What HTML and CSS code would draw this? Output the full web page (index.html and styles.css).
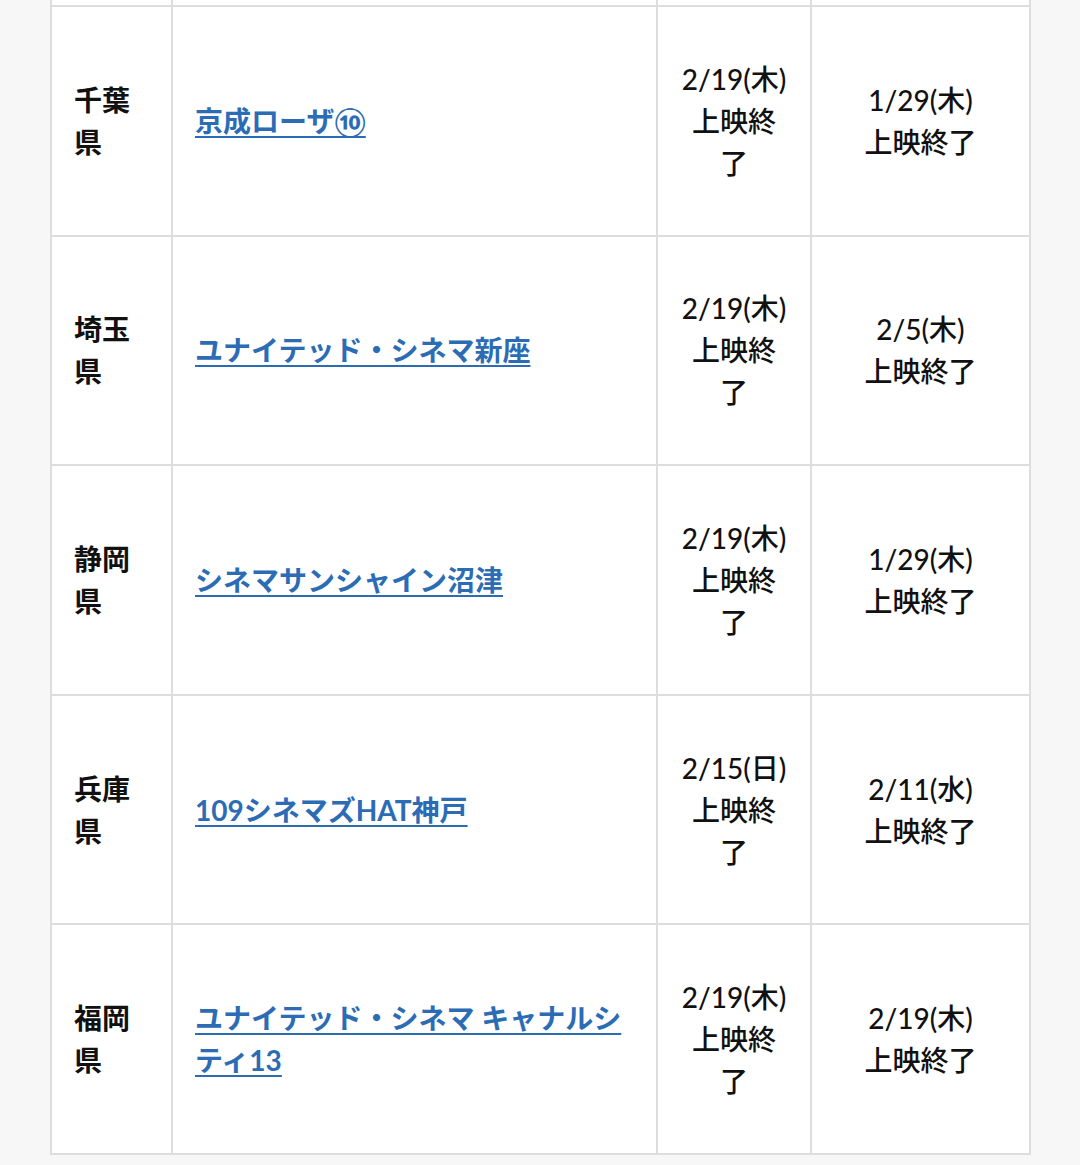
FILE: index.html
```html
<!DOCTYPE html>
<html lang="ja">
<head>
<meta charset="utf-8">
<link rel="stylesheet" href="styles.css">
</head>
<body>
<table class="theaters">
  <colgroup>
    <col class="c-pref"><col class="c-name"><col class="c-date"><col class="c-end">
  </colgroup>
  <tr class="spacer"><td></td><td></td><td></td><td></td></tr>
  <tr>
    <td class="pref">千葉県</td>
    <td class="name"><a href="#">京成ローザ⑩</a></td>
    <td class="date">2/19(木)上映終了</td>
    <td class="date">1/29(木)<br>上映終了</td>
  </tr>
  <tr>
    <td class="pref">埼玉県</td>
    <td class="name"><a href="#">ユナイテッド・シネマ新座</a></td>
    <td class="date">2/19(木)上映終了</td>
    <td class="date">2/5(木)<br>上映終了</td>
  </tr>
  <tr>
    <td class="pref">静岡県</td>
    <td class="name"><a href="#">シネマサンシャイン沼津</a></td>
    <td class="date">2/19(木)上映終了</td>
    <td class="date">1/29(木)<br>上映終了</td>
  </tr>
  <tr>
    <td class="pref">兵庫県</td>
    <td class="name"><a href="#">109シネマズHAT神戸</a></td>
    <td class="date">2/15(日)上映終了</td>
    <td class="date">2/11(水)<br>上映終了</td>
  </tr>
  <tr>
    <td class="pref">福岡県</td>
    <td class="name"><a href="#">ユナイテッド・シネマ キャナルシティ13</a></td>
    <td class="date">2/19(木)上映終了</td>
    <td class="date">2/19(木)<br>上映終了</td>
  </tr>
</table>
</body>
</html>
```
FILE: styles.css
```css
html, body {
  margin: 0;
  padding: 0;
  background: #f7f7f7;
}
body {
  font-family: "Lato", "Noto Sans CJK JP", sans-serif;
  font-size: 28px;
  font-weight: 700;
  color: #111;
  line-height: 42px;
}
.theaters {
  margin: 0 50px;
  width: 979px;
  table-layout: fixed;
  border-collapse: collapse;
  background: #fff;
}
.c-pref { width: 121px; }
.c-name { width: 485px; }
.c-date { width: 154px; }
.c-end { width: 219px; }
.theaters td {
  border: 2px solid #dddddd;
  vertical-align: middle;
  padding: 0 22px;
}
.theaters tr { height: 229.6px; }
.theaters tr.spacer { height: 6px; }
.theaters tr.spacer td { border-top: none; padding: 0; }
.pref { text-align: left; }
.name a {
  color: #2b6cb5;
  text-decoration: underline;
  text-underline-offset: 4px;
  text-decoration-thickness: 2px;
}
.date { text-align: center; font-weight: 500; }
.theaters td.date:nth-child(3) { padding: 0 23px; }
```
